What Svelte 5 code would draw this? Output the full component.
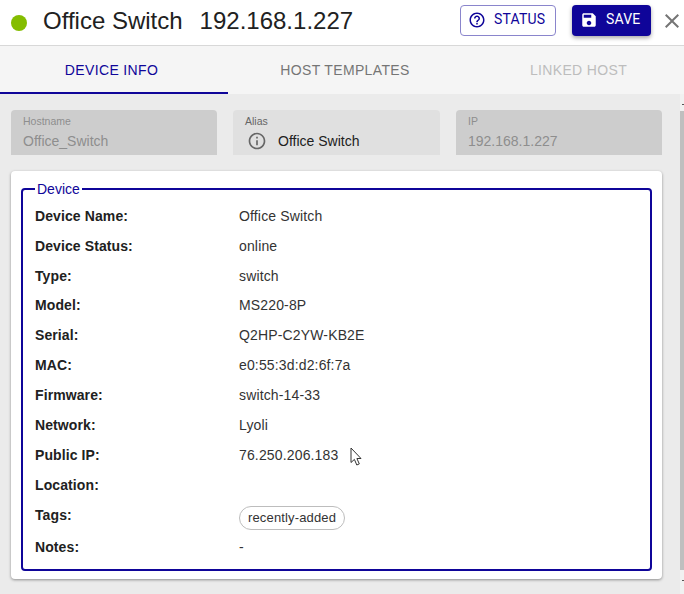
<script>
  const rows = [
    ['Device Name:', 'Office Switch'],
    ['Device Status:', 'online'],
    ['Type:', 'switch'],
    ['Model:', 'MS220-8P'],
    ['Serial:', 'Q2HP-C2YW-KB2E'],
    ['MAC:', 'e0:55:3d:d2:6f:7a'],
    ['Firmware:', 'switch-14-33'],
    ['Network:', 'Lyoli'],
    ['Public IP:', '76.250.206.183'],
    ['Location:', ''],
  ];
</script>

<div class="page">
  <header class="header">
    <span class="dot"></span>
    <h1 class="title"><span>Office Switch</span><span>192.168.1.227</span></h1>
    <button class="status">
      <svg viewBox="0 0 24 24" width="18" height="18"><path fill="currentColor" d="M11 18h2v-2h-2v2zm1-16C6.48 2 2 6.48 2 12s4.48 10 10 10 10-4.48 10-10S17.52 2 12 2zm0 18c-4.41 0-8-3.59-8-8s3.59-8 8-8 8 3.59 8 8-3.59 8-8 8zm0-14c-2.21 0-4 1.79-4 4h2c0-1.1.9-2 2-2s2 .9 2 2c0 2-3 1.75-3 5h2c0-2.25 3-2.5 3-5 0-2.21-1.79-4-4-4z"/></svg>
      <span>STATUS</span>
    </button>
    <button class="save">
      <svg viewBox="0 0 24 24" width="18" height="18"><path fill="currentColor" d="M17 3H5c-1.11 0-2 .9-2 2v14c0 1.1.89 2 2 2h14c1.1 0 2-.9 2-2V7l-4-4zm-5 16c-1.66 0-3-1.34-3-3s1.34-3 3-3 3 1.34 3 3-1.34 3-3 3zm3-10H5V5h10v4z"/></svg>
      <span>SAVE</span>
    </button>
    <svg class="close" viewBox="0 0 24 24" width="24" height="24"><path fill="currentColor" d="M19 6.41L17.59 5 12 10.59 6.41 5 5 6.41 10.59 12 5 17.59 6.41 19 12 13.41 17.59 19 19 17.59 13.41 12z"/></svg>
  </header>

  <nav class="tabs">
    <div class="tab active">DEVICE INFO</div>
    <div class="tab second">HOST TEMPLATES</div>
    <div class="tab disabled">LINKED HOST</div>
  </nav>

  <main class="body">
    <div class="track"><div class="thumb"></div></div>
    <div class="fields">
      <div class="field disabled">
        <label>Hostname</label>
        <div class="value">Office_Switch</div>
      </div>
      <div class="field alias">
        <label>Alias</label>
        <div class="value">
          <svg viewBox="0 0 24 24" width="20" height="20"><path fill="currentColor" d="M11 7h2v2h-2zm0 4h2v6h-2zm1-9C6.48 2 2 6.48 2 12s4.48 10 10 10 10-4.48 10-10S17.52 2 12 2zm0 18c-4.41 0-8-3.59-8-8s3.59-8 8-8 8 3.59 8 8-3.59 8-8 8z"/></svg>
          <span>Office Switch</span>
        </div>
      </div>
      <div class="field disabled">
        <label>IP</label>
        <div class="value">192.168.1.227</div>
      </div>
    </div>

    <section class="card">
      <fieldset>
        <legend>Device</legend>
        {#each rows as [k, v]}
          <div class="row">
            <div class="key">{k}</div>
            <div class="val">{v}
              {#if k === 'Public IP:'}
                <svg class="cursor" viewBox="0 0 13 20" width="13" height="20"><path fill="#fff" stroke="#333" stroke-width="1" d="M1 1v14.5l3.4-3.1 2.4 5.6 2.5-1.1-2.4-5.4H11z"/></svg>
              {/if}
            </div>
          </div>
        {/each}
        <div class="row tags">
          <div class="key">Tags:</div>
          <div class="val"><span class="chip">recently-added</span></div>
        </div>
        <div class="row notes">
          <div class="key">Notes:</div>
          <div class="val">-</div>
        </div>
      </fieldset>
    </section>
  </main>
</div>

<style>
  :global(body) {
    margin: 0;
    background: #ebebeb;
    font-family: Roboto, "Liberation Sans", Arial, sans-serif;
  }
  .page {
    width: 684px;
    height: 100vh;
    display: flex;
    flex-direction: column;
    overflow: hidden;
    background: #ebebeb;
  }
  .header {
    height: 46px;
    flex: none;
    box-sizing: border-box;
    display: flex;
    align-items: center;
    background: #fff;
    border-bottom: 1px solid #d8d8d8;
    padding: 0 0 0 11px;
  }
  .dot {
    width: 16px;
    height: 16px;
    border-radius: 50%;
    background: #84bd00;
    flex: none;
  }
  .title {
    margin: -4px 0 0 16px;
    flex: 1;
    display: flex;
    gap: 17px;
    font: 400 24px/1 "Liberation Sans", Arial, sans-serif;
    color: #212121;
    white-space: nowrap;
  }
  button {
    font-family: Roboto, "Liberation Sans", Arial, sans-serif;
    font-size: 14px;
    letter-spacing: 0.2px;
    display: flex;
    align-items: center;
    box-sizing: border-box;
    height: 31px;
    border-radius: 4px;
    padding: 0;
    margin-top: -5px;
  }
  button span {
    margin-top: -3px;
  }
  .status {
    width: 96px;
    background: #fff;
    color: #0f0599;
    border: 1px solid #8a85cc;
    gap: 8px;
    padding-left: 7px;
  }
  .save {
    width: 79px;
    margin-left: 16px;
    background: #0f0599;
    color: #fff;
    border: none;
    gap: 8px;
    padding-left: 8px;
    box-shadow: 0 2px 4px rgba(0,0,0,.35);
  }
  .close {
    color: #757575;
    margin: -4px 0 0 9px;
    flex: none;
  }
  .tabs {
    height: 48px;
    flex: none;
    display: flex;
    background: #f5f5f5;
    overflow: hidden;
  }
  .tab {
    width: 233px;
    flex: none;
    box-sizing: border-box;
    height: 48px;
    display: flex;
    align-items: center;
    justify-content: center;
    font: 400 14px "Liberation Sans", Arial, sans-serif;
    letter-spacing: 0.35px;
    color: #757575;
  }
  .tab.active {
    width: 228px;
    padding-right: 5px;
    color: #0f0599;
    border-bottom: 2px solid #0f0599;
    padding-top: 2px;
  }
  .tab.second {
    width: 234px;
  }
  .tab.disabled {
    color: #bdbdbd;
  }
  .body {
    flex: 1;
    position: relative;
    padding: 16px 22px 0 11px;
    box-sizing: border-box;
  }
  .track {
    position: absolute;
    right: 0;
    top: 0;
    bottom: 0;
    width: 4px;
    background: #f1f1f1;
  }
  .track::before,
  .track::after {
    content: "";
    position: absolute;
    right: 0;
    width: 2px;
    height: 1px;
    background: #555;
  }
  .track::before { top: 10px; }
  .track::after { top: 486px; }
  .thumb {
    position: absolute;
    top: 17px;
    width: 4px;
    height: 459px;
    background: #bfbfbf;
  }
  .fields {
    display: grid;
    grid-template-columns: 206px 207px 206px;
    gap: 16px;
  }
  .field {
    height: 45px;
    box-sizing: border-box;
    background: #e0e0e0;
    border-radius: 4px 4px 0 0;
    padding: 5px 12px 0;
    color: #212121;
  }
  .field label {
    display: block;
    font: 400 10.5px/12px "Liberation Sans", Arial, sans-serif;
    color: #666;
  }
  .field .value {
    font: 400 14px/16px "Liberation Sans", Arial, sans-serif;
    margin-top: 6px;
    height: 16px;
    display: flex;
    align-items: center;
  }
  .field.disabled {
    background: #cdcdcd;
  }
  .field.disabled label,
  .field.disabled .value {
    color: #8e8e8e;
  }
  .alias svg {
    color: #666;
    margin-left: 2px;
    margin-right: 11px;
    flex: none;
  }
  .card {
    margin-top: 16px;
    background: #fff;
    border-radius: 4px;
    box-shadow: 0 1px 3px rgba(0,0,0,.4);
    height: 408px;
    padding: 10px 10px 0;
    box-sizing: border-box;
  }
  fieldset {
    margin: 0;
    height: 390px;
    box-sizing: border-box;
    border: 2px solid #0f0599;
    border-radius: 4px;
    padding: 8.75px 12px 0;
  }
  legend {
    font: 400 14px/16px "Liberation Sans", Arial, sans-serif;
    color: #0f0599;
    padding: 0 2px;
    margin-top: -1px;
  }
  .row {
    display: flex;
    height: 29.9px;
    font: 400 14px/20px "Liberation Sans", Arial, sans-serif;
    color: #333;
  }
  .key {
    width: 204px;
    flex: none;
    font-weight: 700;
    letter-spacing: 0.1px;
    color: #212121;
  }
  .val {
    position: relative;
    flex: 1;
    letter-spacing: 0.15px;
  }
  .cursor {
    position: absolute;
    left: 111px;
    top: 2px;
  }
  .row.tags {
    height: 32px;
  }
  .chip {
    display: inline-block;
    box-sizing: border-box;
    height: 24px;
    line-height: 22px;
    padding: 0 8px;
    border: 1px solid #bdbdbd;
    border-radius: 12px;
    font-size: 13px;
    margin-top: 1px;
  }
</style>
